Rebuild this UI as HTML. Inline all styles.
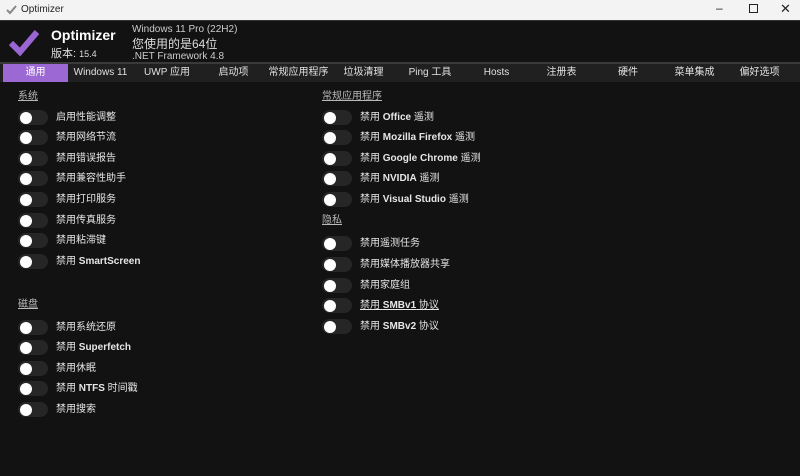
<!DOCTYPE html>
<html><head><meta charset="utf-8"><style>
*{margin:0;padding:0;box-sizing:border-box}
body{width:800px;height:476px;background:#121212;font-family:"Liberation Sans","Noto Sans CJK SC",sans-serif;position:relative;overflow:hidden;color:#e6e6e6}
.tb{position:absolute;left:0;top:0;width:800px;height:20px;background:#f3f3f3;color:#222;font-size:10px}
.hd{position:absolute;left:0;top:20px;width:800px;height:42px;background:#121212;border-top:1px solid #333}
.sep{position:absolute;left:0;top:62px;width:800px;height:2px;background:#3a3a3a}
.tabs{position:absolute;left:0;top:64px;width:800px;height:18px;background:#202020}
.tab{position:absolute;top:0;height:18px;line-height:18px;font-size:10px;color:#e0e0e0;text-align:center}
.t{position:absolute;font-size:10px;line-height:15px;color:#e6e6e6;white-space:nowrap}
.h{position:absolute;font-size:10px;line-height:14px;color:#b8b8b8;text-decoration:underline;white-space:nowrap}
.sw{position:absolute;width:30px;height:15px;border-radius:8px;background:#262626}
.sw::after{content:"";position:absolute;left:2px;top:1.5px;width:12px;height:12px;border-radius:50%;background:#fff}
</style></head><body>
<div class="tb">
<svg style="position:absolute;left:6px;top:5px" width="11" height="10"><path d="M1 5 L4 8 L10 1" stroke="#888" stroke-width="2" fill="none"/></svg>
<span style="position:absolute;left:21px;top:4px">Optimizer</span>
<span style="position:absolute;left:716px;top:1px;font-size:12px">–</span>
<span style="position:absolute;left:749px;top:4px;width:9px;height:9px;border:1px solid #222"></span>
<span style="position:absolute;left:780px;top:1px;font-size:13px">✕</span>
</div>
<div class="hd">
<svg style="position:absolute;left:8px;top:8px" width="32" height="28"><path d="M3 14 L12 23 L29 3" stroke="#9a66d4" stroke-width="6" fill="none"/></svg>
<div style="position:absolute;left:51px;top:6px;font-size:14px;font-weight:bold;color:#fff">Optimizer</div>
<div style="position:absolute;left:51px;top:24px;font-size:11px;color:#ddd">版本: <span style="font-size:9px">15.4</span></div>
<div style="position:absolute;left:132px;top:3px;font-size:10px;color:#ccc">Windows 11 Pro (22H2)</div>
<div style="position:absolute;left:132px;top:14px;font-size:12px;color:#ddd">您使用的是64位</div>
<div style="position:absolute;left:132px;top:30px;font-size:10px;color:#ccc">.NET Framework 4.8</div>
</div>
<div class="sep"></div>
<div class="tabs">
<div class="tab" style="left:3px;width:65px;background:#9b68d4;color:#fff">通用</div>
<div class="tab" style="left:68px;width:65px">Windows 11</div>
<div class="tab" style="left:133px;width:68px">UWP 应用</div>
<div class="tab" style="left:201px;width:65px">启动项</div>
<div class="tab" style="left:266px;width:65px">常规应用程序</div>
<div class="tab" style="left:331px;width:65px">垃圾清理</div>
<div class="tab" style="left:396px;width:68px">Ping 工具</div>
<div class="tab" style="left:464px;width:65px">Hosts</div>
<div class="tab" style="left:529px;width:65px">注册表</div>
<div class="tab" style="left:594px;width:68px">硬件</div>
<div class="tab" style="left:662px;width:65px">菜单集成</div>
<div class="tab" style="left:727px;width:65px">偏好选项</div>
</div>

<div class="h" style="left:18px;top:90px">系统</div>
<div class="sw" style="left:18px;top:110px"></div><div class="t" style="left:56px;top:110px">启用性能调整</div>
<div class="sw" style="left:18px;top:130px"></div><div class="t" style="left:56px;top:130px">禁用网络节流</div>
<div class="sw" style="left:18px;top:151px"></div><div class="t" style="left:56px;top:151px">禁用错误报告</div>
<div class="sw" style="left:18px;top:171px"></div><div class="t" style="left:56px;top:171px">禁用兼容性助手</div>
<div class="sw" style="left:18px;top:192px"></div><div class="t" style="left:56px;top:192px">禁用打印服务</div>
<div class="sw" style="left:18px;top:213px"></div><div class="t" style="left:56px;top:213px">禁用传真服务</div>
<div class="sw" style="left:18px;top:233px"></div><div class="t" style="left:56px;top:233px">禁用粘滞键</div>
<div class="sw" style="left:18px;top:254px"></div><div class="t" style="left:56px;top:254px">禁用 <b>SmartScreen</b></div>

<div class="h" style="left:18px;top:298px">磁盘</div>
<div class="sw" style="left:18px;top:320px"></div><div class="t" style="left:56px;top:320px">禁用系统还原</div>
<div class="sw" style="left:18px;top:340px"></div><div class="t" style="left:56px;top:340px">禁用 <b>Superfetch</b></div>
<div class="sw" style="left:18px;top:361px"></div><div class="t" style="left:56px;top:361px">禁用休眠</div>
<div class="sw" style="left:18px;top:381px"></div><div class="t" style="left:56px;top:381px">禁用 <b>NTFS</b> 时间戳</div>
<div class="sw" style="left:18px;top:402px"></div><div class="t" style="left:56px;top:402px">禁用搜索</div>

<div class="h" style="left:322px;top:90px">常规应用程序</div>
<div class="sw" style="left:322px;top:110px"></div><div class="t" style="left:360px;top:110px">禁用 <b>Office</b> 遥测</div>
<div class="sw" style="left:322px;top:130px"></div><div class="t" style="left:360px;top:130px">禁用 <b>Mozilla Firefox</b> 遥测</div>
<div class="sw" style="left:322px;top:151px"></div><div class="t" style="left:360px;top:151px">禁用 <b>Google Chrome</b> 遥测</div>
<div class="sw" style="left:322px;top:171px"></div><div class="t" style="left:360px;top:171px">禁用 <b>NVIDIA</b> 遥测</div>
<div class="sw" style="left:322px;top:192px"></div><div class="t" style="left:360px;top:192px">禁用 <b>Visual Studio</b> 遥测</div>

<div class="h" style="left:322px;top:214px">隐私</div>
<div class="sw" style="left:322px;top:236px"></div><div class="t" style="left:360px;top:236px">禁用遥测任务</div>
<div class="sw" style="left:322px;top:257px"></div><div class="t" style="left:360px;top:257px">禁用媒体播放器共享</div>
<div class="sw" style="left:322px;top:278px"></div><div class="t" style="left:360px;top:278px">禁用家庭组</div>
<div class="sw" style="left:322px;top:298px"></div><div class="t" style="left:360px;top:298px;text-decoration:underline">禁用 <b>SMBv1</b> 协议</div>
<div class="sw" style="left:322px;top:319px"></div><div class="t" style="left:360px;top:319px">禁用 <b>SMBv2</b> 协议</div>
</body></html>
